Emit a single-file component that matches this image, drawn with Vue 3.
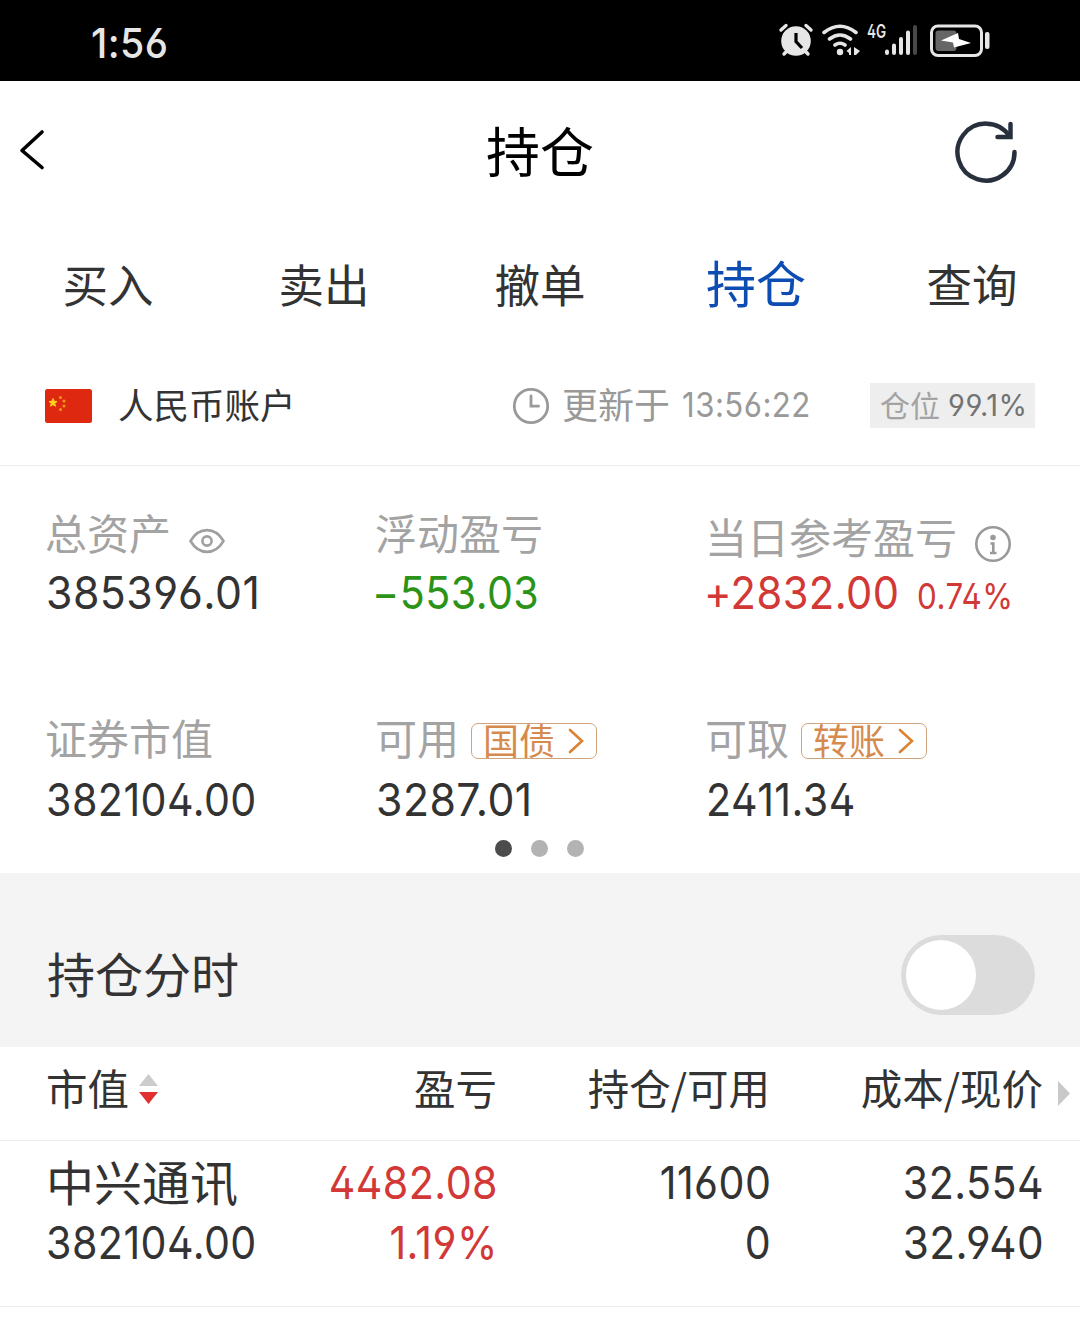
<script setup>
import { ref } from 'vue'

const tabs = ['买入', '卖出', '撤单', '持仓', '查询']
const activeTab = ref('持仓')
const floating = ref(false)
</script>

<template>
  <div class="screen">
    <div class="status">
      <span class="clock num">1:56</span>
      <svg class="status-icons" width="220" height="40" viewBox="0 0 220 40">
        <g fill="none" stroke="#e6e6e6" stroke-linecap="round">
          <circle cx="26" cy="21" r="14.8" fill="#e6e6e6" stroke="none" />
          <path d="M11 10 16 5.500M41 10 36 5.500" stroke-width="3.400" />
          <path d="M14 34 17 31M38 34 35 31" stroke-width="3.400" />
          <path d="M26 13V21.500L32 28" stroke="#000" stroke-width="3.200" stroke-linecap="butt" />
          <path d="M54 12.500Q70 0 86 12.500M59.500 19Q70 11 80.500 19M65 25Q70 21.500 75 25" stroke-width="3.600" />
        </g>
        <circle cx="70" cy="32" r="3.200" fill="#e6e6e6" />
        <path d="M81 27V35H79V33L76.500 31ZM84 27 90 31 86 35H84Z" fill="#e6e6e6" />
        <g stroke="#e6e6e6" stroke-width="4" stroke-linecap="round">
          <path d="M117 31.500V33M124 25.500V33M131 19V33M138 12.500V33" />
          <path d="M145 7V33" stroke="#484848" />
        </g>
        <rect x="161.500" y="6" width="50" height="29.500" rx="6.500" fill="none" stroke="#e6e6e6" stroke-width="3" />
        <rect x="165.500" y="10.500" width="21" height="20.500" rx="3" fill="#666" />
        <path d="M171 20.500 188 13 189 19 201 23 184 27.500 183 22.500Z" fill="#fff" />
        <rect x="215" y="12" width="4.500" height="17" rx="2" fill="#e6e6e6" />
      </svg>
      <span class="net num">4G</span>
    </div>

    <header class="header">
      <svg width="28" height="42" viewBox="0 0 28 42">
        <path d="M24 3 4 21.500 24 38.500" fill="none" stroke="#000" stroke-width="3.600" stroke-linecap="round" stroke-linejoin="round" />
      </svg>
      <h1>持仓</h1>
      <svg class="refresh" width="66" height="66" viewBox="0 0 66 66" fill="none" stroke="#27303c" stroke-width="4.500" stroke-linecap="round">
        <path d="M61.500 33A28.500 28.500 0 1 1 56.500 17" />
        <path d="M57.500 5V18H44.500" stroke-linejoin="miter" />
      </svg>
    </header>

    <nav class="tabs">
      <a v-for="t in tabs" :key="t" :class="{ active: t === activeTab }" @click="activeTab = t">{{ t }}</a>
    </nav>

    <div class="account">
      <svg class="flag" width="47" height="34" viewBox="0 0 47 34">
        <rect width="47" height="34" rx="2.500" fill="#de2910" />
        <path d="M8 9.500 9.100 12.300 12 12.500 9.700 14.300 10.500 17.200 8 15.600 5.500 17.200 6.300 14.300 4 12.500 6.900 12.300Z" fill="#ffd21f" stroke="#ffd21f" />
        <g fill="#f29a12">
          <circle cx="15.500" cy="8.500" r="1.500" /><circle cx="19" cy="12" r="1.500" />
          <circle cx="19" cy="17" r="1.500" /><circle cx="15.500" cy="20.500" r="1.500" />
        </g>
      </svg>
      <span class="acct-name">人民币账户</span>
      <svg class="time-icon" width="38" height="38" viewBox="0 0 38 38" fill="none" stroke="#999" stroke-width="2.800">
        <circle cx="19" cy="19" r="16.700" /><path d="M19 9V19.200H26.500" stroke-linecap="round" />
      </svg>
      <span class="updated">更新于</span>
      <span class="time num">13:56:22</span>
      <span class="ratio"><span class="ratio-name">仓位</span><span class="num pct">99.1%</span></span>
    </div>

    <section class="stats">
      <div class="grid">
        <div class="cell">
          <div class="label">总资产
            <svg class="eye" width="38" height="28" viewBox="0 0 38 28" fill="none" stroke="#a0a0a0" stroke-width="2.600">
              <path d="M2.500 14C11-.5 27-.5 35.500 14 27 28.500 11 28.500 2.500 14Z" stroke-linejoin="round" /><circle cx="19" cy="14" r="4.600" />
            </svg>
          </div>
          <div class="value"><span class="num total">385396.01</span></div>
        </div>
        <div class="cell">
          <div class="label">浮动盈亏</div>
          <div class="value green"><span class="num minus">−553.03</span></div>
        </div>
        <div class="cell">
          <div class="label low">当日参考盈亏
            <svg class="info" width="38" height="38" viewBox="0 0 38 38" fill="none" stroke="#999" stroke-width="2.600">
              <circle cx="19" cy="19" r="16.700" /><circle cx="19" cy="12.500" r="2.800" fill="#999" stroke="none" />
              <path d="M16.500 18.500H19.300V27.500M16 28H22.500" />
            </svg>
          </div>
          <div class="value red"><span class="num plus">+2832.00</span><span class="num small">0.74%</span></div>
        </div>
        <div class="cell">
          <div class="label">证券市值</div>
          <div class="value second"><span class="num">382104.00</span></div>
        </div>
        <div class="cell">
          <div class="label">可用
            <span class="tag"><span>国债</span><svg width="18" height="28" viewBox="0 0 18 28"><path d="M3 3 15 14 3 25" /></svg></span>
          </div>
          <div class="value second"><span class="num usable">3287.01</span></div>
        </div>
        <div class="cell">
          <div class="label">可取
            <span class="tag"><span>转账</span><svg width="18" height="28" viewBox="0 0 18 28"><path d="M3 3 15 14 3 25" /></svg></span>
          </div>
          <div class="value second"><span class="num">2411.34</span></div>
        </div>
      </div>
      <div class="dots"><i class="on"></i><i></i><i></i></div>
    </section>

    <section class="toggle-row">
      <span>持仓分时</span>
      <button class="switch" :class="{ on: floating }" @click="floating = !floating"><i></i></button>
    </section>

    <div class="row thead">
      <span class="c1">市值
        <svg width="20" height="30" viewBox="0 0 20 30"><path d="M0 12 9.500 0 19 12Z" fill="#ccc" /><path d="M0 18H19L9.500 30Z" fill="#e03030" /></svg>
      </span>
      <span class="c2">盈亏</span>
      <span class="c3">持仓/可用</span>
      <span class="c4">成本/现价</span>
      <svg class="more" width="12" height="25" viewBox="0 0 12 25"><path d="M0 0 12 12.500 0 25Z" fill="#c9c9c9" /></svg>
    </div>
    <div class="row holding">
      <div class="c1"><div class="name">中兴通讯</div><div class="line"><span class="num">382104.00</span></div></div>
      <div class="c2 red"><div class="line"><span class="num">4482.08</span></div><div class="line"><span class="num">1.19%</span></div></div>
      <div class="c3"><div class="line"><span class="num">11600</span></div><div class="line"><span class="num">0</span></div></div>
      <div class="c4"><div class="line"><span class="num">32.554</span></div><div class="line"><span class="num wide">32.940</span></div></div>
    </div>
  </div>
</template>

<style>
body { margin: 0; background: #fff; }
</style>

<style scoped>
.screen { width: 1080px; height: 1320px; overflow: hidden; background: #fff; color: #333; font-family: "Noto Sans CJK SC", sans-serif; white-space: nowrap; }
.num { display: inline-block; font-family: Inter, Roboto, sans-serif; font-feature-settings: "cv02", "cv03", "cv04"; font-size: 45.500px; font-weight: 430; letter-spacing: .5px; transform: scaleX(.905); transform-origin: left center; }

.status { position: relative; height: 81px; background: #000; }
.clock { margin-left: 91px; color: #e6e6e6; font-size: 41.500px; font-weight: 450; line-height: 87px; transform: scaleX(.945); }
.status-icons { position: absolute; left: 770px; top: 20px; }
.net { position: absolute; left: 867px; top: 22px; color: #e6e6e6; font-size: 18px; font-weight: 600; line-height: 20px; letter-spacing: 0; transform: scaleX(.75); }

.header { display: flex; align-items: center; justify-content: space-between; height: 142px; padding: 0 61px 0 18px; box-sizing: border-box; }
.header h1 { margin: -4px 0 0 81px; color: #000; font-size: 54px; font-weight: 400; line-height: 138px; }
.header > svg { margin-bottom: 4px; }
.header .refresh { margin-bottom: 0; }

.tabs { display: grid; grid-template-columns: repeat(5, 216px); height: 124px; text-align: center; }
.tabs a { font-size: 45.500px; line-height: 121px; }
.tabs .active { font-size: 50px; color: #0d4db3; line-height: 117px; }

.account { display: flex; align-items: center; height: 117px; padding: 0 0 1px 45px; border-bottom: 1px solid #ececec; }
.acct-name { width: 394px; margin: -5px 0 0 26px; font-size: 35.500px; }
.time-icon { margin-right: 12px; }
.updated { width: 120px; margin-top: -5px; color: #999; font-size: 36px; }
.time { width: 188px; margin-top: -2px; color: #999; font-size: 34.500px; }
.ratio { display: flex; align-items: center; width: 155px; height: 45px; padding-left: 10px; background: #eee; color: #a3a3a3; font-size: 30px; }
.ratio-name { margin-top: -4px; }
.pct { margin: -2px 0 0 8px; color: #737373; font-size: 29.500px; transform: scaleX(.985); }

.stats { height: 407px; padding: 37px 0 0 46px; box-sizing: border-box; }
.grid { display: grid; grid-template-columns: repeat(3, 330px); row-gap: 85px; height: 327px; grid-auto-rows: 120px; }
.label { display: flex; align-items: center; height: 56px; margin-left: -1px; padding-bottom: 4px; color: #a3a3a3; font-size: 42px; }
.low { position: relative; top: 4px; }
.eye { margin: 19px 0 0 17px; }
.info { margin: 18px 0 0 17px; }
.value { height: 60px; line-height: 60px; }
.second { line-height: 64px; }
.total { transform: scaleX(.94); }
.minus { margin-left: -4px; }
.plus { margin-left: -2px; transform: scaleX(.915); }
.usable { transform: scaleX(.94); }
.green { color: #2b9418; }
.red { color: #d13836; }
.small { margin-left: -1px; font-size: 36px; transform: scaleX(.87); }
.tag { display: flex; align-items: center; width: 124px; height: 34px; margin: 9px 0 0 12px; border: 1.500px solid #cfa47c; border-radius: 7px; color: #d58a4e; font-size: 36px; }
.tag span { margin: -4px 0 0 11px; }
.tag svg { margin-left: 12px; fill: none; stroke: #dc8233; stroke-width: 2.600; stroke-linecap: round; }
.dots { display: flex; gap: 19px; padding-left: 449px; margin-top: 10px; }
.dots i { width: 17px; height: 17px; border-radius: 50%; background: #b3b3b3; }
.dots .on { background: #4c4c4c; }

.toggle-row { display: flex; align-items: center; justify-content: space-between; height: 174px; padding: 0 45px 0 47px; box-sizing: border-box; background: #f4f4f4; font-size: 48px; }
.toggle-row > span { margin-top: 24px; }
.switch { width: 134px; height: 80px; margin-top: 30px; padding: 5px; border: 0; border-radius: 40px; background: #dcdcdc; }
.switch i { display: block; width: 70px; height: 70px; border-radius: 50%; background: #fff; }
.switch.on i { margin-left: 54px; }

.row { display: flex; padding-left: 46px; border-bottom: 1px solid #ececec; }
.thead { height: 93px; font-size: 41.500px; line-height: 81px; }
.c1 { width: 240px; }
.c2 { width: 211px; text-align: right; }
.c3 { width: 273px; text-align: right; }
.c4 { width: 273px; text-align: right; }
.more { margin: 34px 0 0 15px; }
.c1 svg { margin: 0 0 1px 1px; }
.holding { height: 165px; }
.name { height: 72px; font-size: 48px; line-height: 79px; }
.line { height: 60px; line-height: 60px; }
.c2, .c3, .c4 { box-sizing: border-box; }
.holding .c2, .holding .c3, .holding .c4 { padding-top: 12px; }
.c2 .num, .c3 .num, .c4 .num { margin-right: -1px; transform-origin: right center; }
.c4 .wide { transform: scaleX(.93); }
</style>
